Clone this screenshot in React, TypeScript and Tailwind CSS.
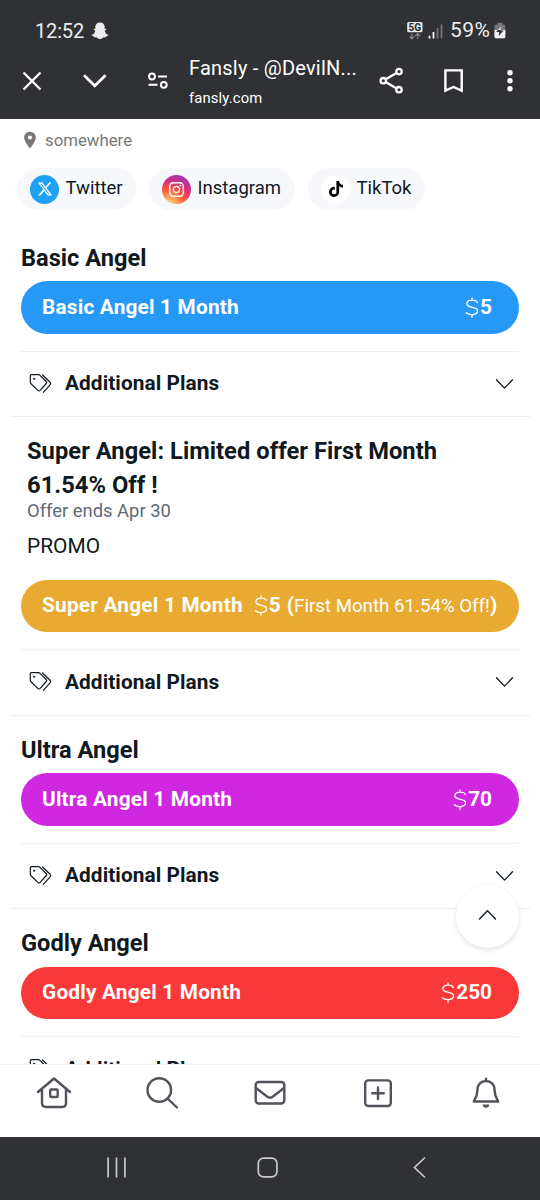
import type { ReactNode } from 'react';
import { FaInstagram, FaTiktok, FaXTwitter } from 'react-icons/fa6';
import { MdLocationOn } from 'react-icons/md';

function StatusBar() {
  return (
    <div className="flex h-[61px] items-center pl-[35px] pr-[34px] text-[20px] text-[#ececee]">
      <span className="w-[49px] whitespace-nowrap tracking-[-0.15px]">12:52</span>
      <svg className="ml-[7px] mt-px h-[18px] w-[18px]" viewBox="0 0 18 18" fill="currentColor">
        <path d="M9 .5C6.200.500 4.300 2.300 4.300 5v1.900c-.5.200-1.400-.3-1.700.2-.3.700 1 1.100 1.500 1.500.5.500-.4 2.300-1.600 3.300C1.700 12.500.3 12.700.4 13.200c.2.600 1.900.7 2.200 1 .2.300.1.900.4 1.100.6.300 1.700-.2 2.700.2 1 .4 1.800 1.600 3.300 1.600s2.300-1.200 3.300-1.600c1-.4 2.100.1 2.700-.2.300-.2.200-.8.400-1.100.3-.3 2-.4 2.200-1 .1-.5-1.300-.7-2.100-1.300-1.200-1-2.100-2.800-1.600-3.300.5-.4 1.800-.8 1.500-1.500-.3-.5-1.200 0-1.700-.2V5c0-2.700-1.900-4.500-4.700-4.500Z" />
      </svg>
      <svg className="ml-auto h-[20px] w-[38px]" viewBox="0 0 38 20">
        <rect x=".2" y="1" width="15.300" height="10.300" rx="1.500" fill="#ececee" />
        <text x="1.500" y="9.700" fontFamily="Roboto, sans-serif" fontSize="10" fontWeight="800" fill="#303134" textLength="12.600" lengthAdjust="spacingAndGlyphs">5G</text>
        <path d="M4.900 12.500v5.500M2.500 15.500l2.400 2.500L7.300 15.500M10.700 18v-5.500M8.300 15l2.400-2.500L13.100 15" fill="none" stroke="#85868a" strokeWidth="1.200" />
        <path d="M22.500 17.500v-2.700M26.500 17.500v-6.500" stroke="#fff" strokeWidth="1.700" />
        <path d="M30.500 17.500V7M34.500 17.500v-14" stroke="#77787c" strokeWidth="1.700" />
      </svg>
      <span className="ml-[5px] w-[43px] whitespace-nowrap text-[21px] tracking-[0.500px]">59%</span>
      <svg className="ml-[1px] h-[17px] w-[12px]" viewBox="0 0 12 17">
        <path d="M3.500.8h5v1.700h1q1.800 0 1.800 1.800v10.400q0 1.600-1.600 1.600H2.100Q.5 16.300.5 14.700V4.300q0-1.800 1.800-1.800h1.200Z" fill="#77787c" />
        <path d="M.5 8h10.800v6.700q0 1.600-1.600 1.600H2.100Q.5 16.300.5 14.700Z" fill="#f1f1f2" />
        <path d="M7 4.300 2.300 10h3L4.600 14.300 9.600 8.500H6.500Z" fill="#303134" />
        <path d="M7 4.300 4 8h2.600Z" fill="#f1f1f2" />
      </svg>
    </div>
  );
}

function BrowserBar() {
  return (
    <div className="flex h-[57px] text-white">
      <svg className="ml-[20px] mt-[8px] size-[24px]" viewBox="0 0 24 24" fill="none" stroke="currentColor" strokeWidth="2.300">
        <path d="m3.500 3.500 17 17m0-17-17 17" />
      </svg>
      <svg className="ml-[38px] mt-[8px] size-[26px]" viewBox="0 0 26 26" fill="none" stroke="currentColor" strokeWidth="2.700">
        <path d="m2 6.200 10.800 10.600L23.600 6.200" />
      </svg>
      <svg className="ml-[38px] mt-[8px] size-[24px]" viewBox="0 0 24 24" fill="none" stroke="currentColor" strokeWidth="2">
        <circle cx="6" cy="7.500" r="2.900" />
        <circle cx="17.800" cy="15.800" r="2.900" />
        <path d="M12 7.500h9M2.500 15.800h9" />
      </svg>
      <div className="ml-[19px] flex w-[170px] flex-col whitespace-nowrap">
        <span className="-mt-[6px] text-[20px] leading-[26px] tracking-[0.220px]">Fansly - @DevilN...</span>
        <span className="mt-[7px] text-[14.800px] leading-[20px] tracking-[0.150px]">fansly.com</span>
      </div>
      <svg className="ml-[19px] mt-[6px] size-[28px]" viewBox="0 0 28 28" fill="none" stroke="currentColor" strokeWidth="2.300">
        <circle cx="5.300" cy="13.700" r="2.700" />
        <circle cx="21" cy="4.600" r="2.700" />
        <circle cx="21" cy="22.700" r="2.700" />
        <path d="m7.700 12.300 10.900-6.300M7.700 15.100l10.900 6.300" />
      </svg>
      <svg className="ml-[37px] mt-[6px] h-[28px] w-[22px]" viewBox="0 0 22 28" fill="none" stroke="currentColor" strokeWidth="2.400">
        <path d="M2.400 3.400h16.300v20.200L10.500 20l-8.100 3.600Z" />
      </svg>
      <svg className="ml-[39px] mt-[6px] h-[28px] w-[12px]" viewBox="0 0 12 28" fill="currentColor">
        <circle cx="6" cy="5.800" r="2.700" />
        <circle cx="6" cy="13.700" r="2.700" />
        <circle cx="6" cy="21.700" r="2.700" />
      </svg>
    </div>
  );
}

function Social({ icon, label, className, disc }: { icon: ReactNode; label: string; className: string; disc: string }) {
  return (
    <div className={`flex h-[42px] items-center rounded-full bg-[#f7f8fb] pl-[13px] text-[18.500px] ${className}`}>
      <span className={`mr-[6.500px] flex size-[29px] items-center justify-center rounded-full ${disc}`}>{icon}</span>
      {label}
    </div>
  );
}

function Dollar() {
  return (
    <svg className="mr-[1px] h-[21px] w-[14px]" viewBox="0 0 14 21" fill="none" stroke="currentColor" strokeWidth="1.300" strokeLinecap="round">
      <path d="M7 .8v2.300M7 17.500v2.700M12.300 5.500C11.500 2.300 2.200 1.800 1.800 6.600 1.600 12 12.900 8.600 12.600 13.900 12.200 18.600 4 18.400 1.300 15.700" />
    </svg>
  );
}

function PlanButton({ name, price, color }: { name: string; price: ReactNode; color: string }) {
  return (
    <div className={`mx-[21px] flex h-[52.500px] items-center rounded-full pl-[21px] pr-[27px] text-[20.800px] font-bold text-white ${color}`}>
      <span className="whitespace-nowrap tracking-[0.200px]">{name}</span>
      <span className="ml-auto flex items-center whitespace-nowrap"><Dollar />{price}</span>
    </div>
  );
}

function AdditionalPlans() {
  return (
    <div className="mt-[17px] flex h-[66.500px] flex-col">
      <div className="mx-[21px] h-px shrink-0 bg-[#efeff1]" />
      <div className="flex flex-1 items-center pl-[29px] pr-[26px]">
        <svg className="h-[22px] w-[24px]" viewBox="0 0 24 22" fill="none" stroke="currentColor" strokeWidth="1.200" strokeLinecap="round" strokeLinejoin="round">
          <path d="M2.600 1.700h7q.8 0 1.400.6l6.200 6.200q1 1 0 2l-6 6.900q-1.200 1.200-2.400 0L2 10.700q-.7-.6-.7-1.500V3q0-1.300 1.300-1.300Z" />
          <path d="m13.500 2 7.600 7.300q1.200 1.300 0 2.600l-6.800 7.400" />
          <circle cx="5.200" cy="5.700" r=".45" fill="currentColor" />
        </svg>
        <span className="ml-[12px] text-[20.800px] font-bold tracking-[0.080px]">Additional Plans</span>
        <svg className="ml-auto h-[12px] w-[20px]" viewBox="0 0 20 12" fill="none" stroke="currentColor" strokeWidth="1.300" strokeLinecap="round" strokeLinejoin="round">
          <path d="m2.500 1.800 8 8.300 8-8.300" />
        </svg>
      </div>
      <div className="mx-[10px] h-px shrink-0 bg-[#efeff1]" />
    </div>
  );
}

function Tier({ title, price, color }: { title: string; price: string; color: string }) {
  return (
    <section className="h-[193.500px] pt-[17px]">
      <h2 className="h-[40.500px] pl-[21px] text-[23.600px] font-bold leading-[34px]">{title}</h2>
      <PlanButton name={`${title} 1 Month`} price={price} color={color} />
      <AdditionalPlans />
    </section>
  );
}

function SuperTier() {
  return (
    <section className="h-[298.500px] pt-[18px]">
      <div className="h-[144.500px] pl-[27px]">
        <h2 className="text-[23.700px] font-bold leading-[33.500px] tracking-[0.040px]">Super Angel: Limited offer First Month<br />61.54% Off !</h2>
        <p className="-mt-px text-[18.400px] leading-[20px] text-[#5f6977]">Offer ends Apr 30</p>
        <p className="mt-[13px] text-[20.900px] leading-[24px]">PROMO</p>
      </div>
      <div className="mx-[21px] flex h-[52.500px] items-center whitespace-nowrap rounded-full bg-[#e8aa30] pl-[21px] text-[20.800px] font-bold text-white">
        <span className="tracking-[0.220px]">Super Angel 1 Month</span>
        <span className="ml-[11px] flex items-center"><Dollar />5</span>
        <span className="ml-[6px]">(<span className="text-[18.700px] font-normal">First Month 61.54% Off!</span>)</span>
      </div>
      <AdditionalPlans />
    </section>
  );
}

function BottomTabs() {
  const icon = 'size-[36px] fill-none stroke-[#50535b] stroke-[2.400]';
  return (
    <nav className="flex h-[73px] justify-between border-t border-[#f1f1f3] bg-white px-[36px] pt-[10px]">
      <svg className={icon} viewBox="0 0 36 36" strokeLinecap="round" strokeLinejoin="round">
        <path d="M2 17 18 3.500 34 17M6 14v14q0 4 4 4h16q4 0 4-4V14" />
        <rect x="14.200" y="14.500" width="7.500" height="7.500" rx="1" />
      </svg>
      <svg className={icon} viewBox="0 0 36 36" strokeLinecap="round">
        <circle cx="15.300" cy="15" r="11.800" />
        <path d="m24 24 9 8.500" />
      </svg>
      <svg className={icon} viewBox="0 0 36 36" strokeLinecap="round" strokeLinejoin="round">
        <rect x="3.700" y="7" width="28.600" height="21.500" rx="3" />
        <path d="m4 13 11 8.500q3 2.300 6 0L32 13" />
      </svg>
      <svg className={icon} viewBox="0 0 36 36" strokeLinecap="round">
        <rect x="5.200" y="5.400" width="25.600" height="25.600" rx="3" />
        <path d="M18 12.500v11.500M12.200 18.200h11.600" />
      </svg>
      <svg className={icon} viewBox="0 0 36 36" strokeLinecap="round" strokeLinejoin="round">
        <path d="M18 3.800v2M18 6c-5 0-8.500 3.600-8.500 8.500 0 6-1.500 8.300-3.700 12h24.400c-2.200-3.700-3.700-6-3.700-12C26.500 9.600 23 6 18 6Z" />
        <path d="M14.500 29.500h7q-.8 3.200-3.500 3.200t-3.500-3.200Z" fill="#50535b" stroke="none" />
      </svg>
    </nav>
  );
}

function SystemNav() {
  return (
    <div className="flex h-[63px] justify-between bg-[#303134] pl-[104px] pr-[108px] pt-[19px] text-[#c9cacd]">
      <svg className="size-[24px]" viewBox="0 0 24 24" stroke="currentColor" strokeWidth="1.700">
        <path d="M4.100 1.500v20M12.500 1.500v20M20.900 1.500v20" />
      </svg>
      <svg className="size-[24px]" viewBox="0 0 24 24" fill="none" stroke="currentColor" strokeWidth="1.700">
        <rect x="2.300" y="2.100" width="18.600" height="18.800" rx="5.200" />
      </svg>
      <svg className="size-[24px]" viewBox="0 0 24 24" fill="none" stroke="currentColor" strokeWidth="1.700">
        <path d="M17 1.500 6.500 11.500 17 21.500" />
      </svg>
    </div>
  );
}

export default function App() {
  return (
    <div className="relative flex h-[1200px] w-[540px] flex-col overflow-hidden bg-white font-['Roboto',sans-serif] text-[#101820]">
      <header className="h-[119px] shrink-0 bg-[#303134]">
        <StatusBar />
        <BrowserBar />
      </header>
      <main className="h-[945px] shrink-0 overflow-hidden">
        <div className="flex h-[49px] pl-[20px] pt-[11px] text-[#777]">
          <MdLocationOn className="size-[20px]" />
          <span className="ml-[5px] text-[16.800px] leading-[20px]">somewhere</span>
        </div>
        <div className="flex h-[55.500px] gap-[13px] pl-[17px]">
          <Social label="Twitter" className="w-[119px]" disc="bg-[#1da1f2]" icon={<FaXTwitter className="size-[16px] text-white" />} />
          <Social label="Instagram" className="w-[146px]" disc="bg-[radial-gradient(circle_at_25%_105%,#fdc868_10%,#ff543e_45%,#d92f82_65%,#6a45d7_100%)]" icon={<FaInstagram className="size-[17px] text-white" />} />
          <Social label="TikTok" className="w-[117px]" disc="bg-white" icon={<FaTiktok className="size-[16px] text-black" />} />
        </div>
        <Tier title="Basic Angel" price="5" color="bg-[#2699f7]" />
        <SuperTier />
        <Tier title="Ultra Angel" price="70" color="bg-[#d027e0]" />
        <Tier title="Godly Angel" price="250" color="bg-[#f93939]" />
      </main>
      <BottomTabs />
      <SystemNav />
      <button aria-label="Scroll to top" className="absolute left-[456px] top-[885px] flex size-[63px] items-center justify-center rounded-full bg-white shadow-[0_2px_5px_rgba(0,0,0,0.12)]">
        <svg className="-mt-[3px] h-[12px] w-[20px]" viewBox="0 0 20 12" fill="none" stroke="currentColor" strokeWidth="1.400" strokeLinecap="round" strokeLinejoin="round">
          <path d="m1.500 10 8-8.300 8 8.300" />
        </svg>
      </button>
    </div>
  );
}
